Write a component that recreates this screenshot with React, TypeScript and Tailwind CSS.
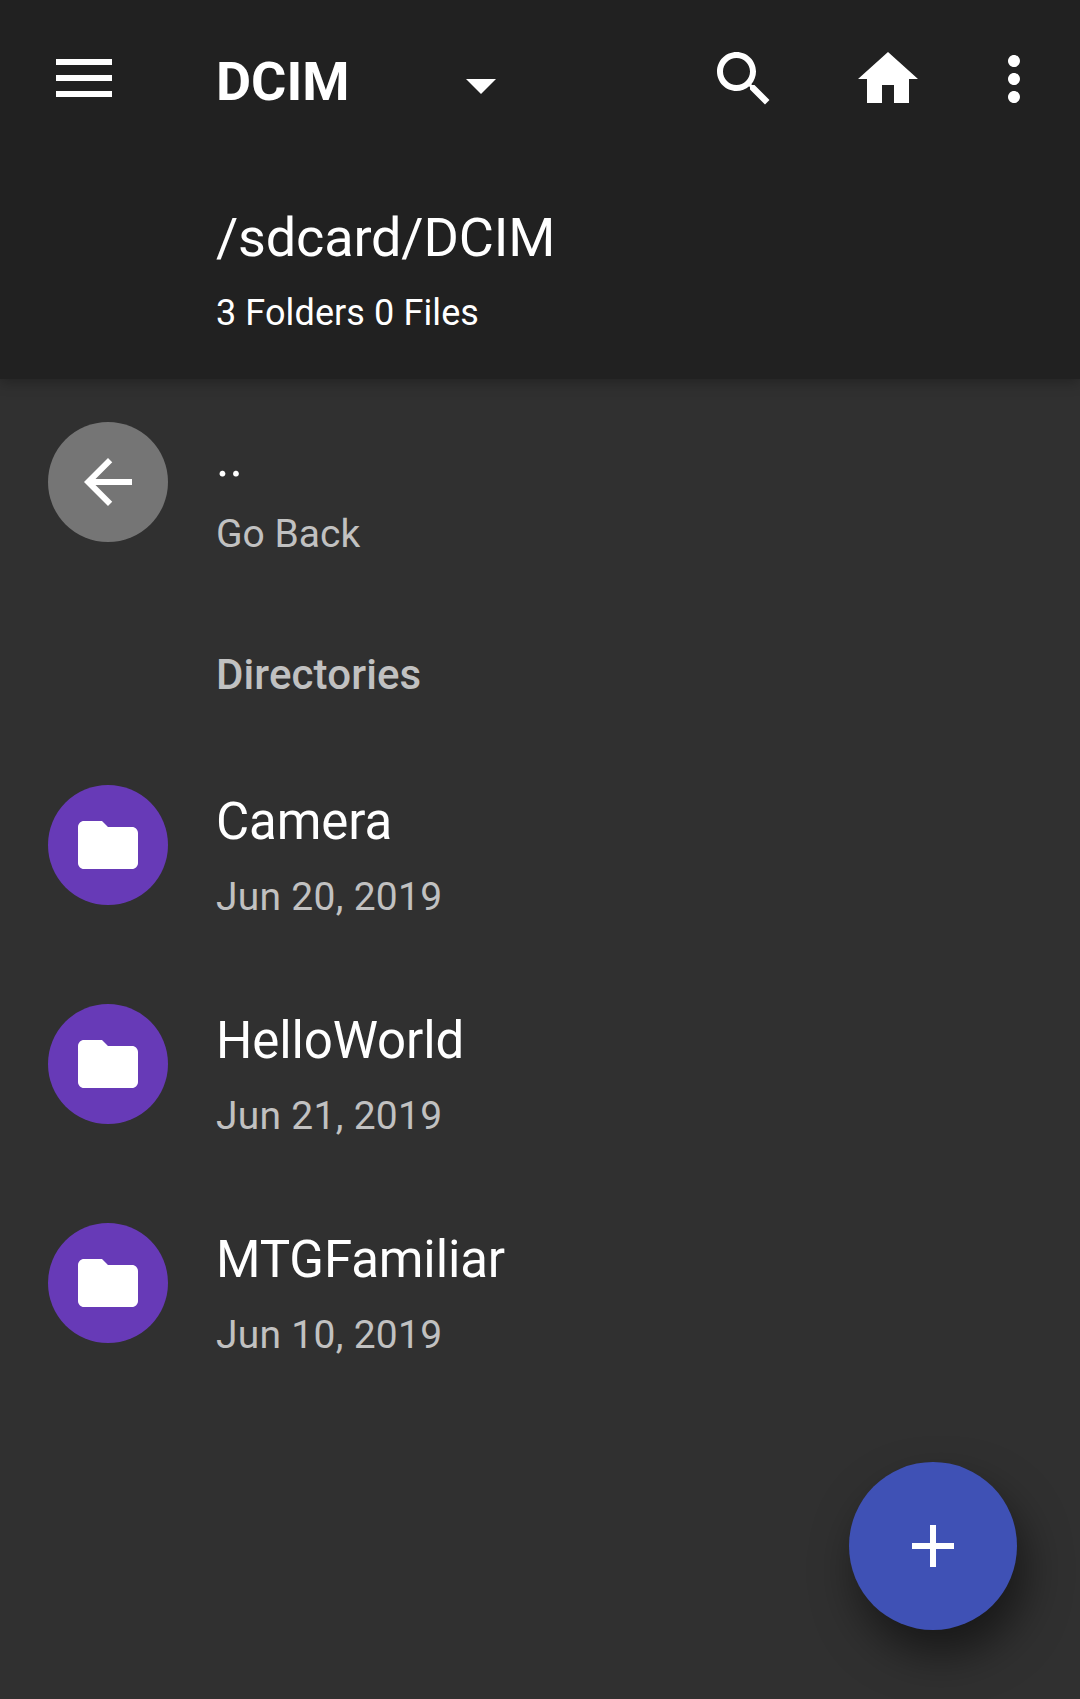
import type { ReactNode } from "react";

function Icon({ d, className = "" }: { d: string; className?: string }) {
  return (
    <svg viewBox="0 0 24 24" className={`size-[72px] shrink-0 fill-white ${className}`} aria-hidden="true">
      <path d={d} />
    </svg>
  );
}

const icons = {
  caret: "M7 10l5 5 5-5z",
  search:
    "M15.5 14h-.79l-.28-.27C15.41 12.59 16 11.11 16 9.5 16 5.91 13.09 3 9.5 3S3 5.91 3 9.5 5.91 16 9.5 16c1.61 0 3.09-.59 4.23-1.57l.27.28v.79l5 4.99L20.49 19l-4.99-5zm-6 0C7.01 14 5 11.99 5 9.5S7.01 5 9.5 5 14 7.01 14 9.5 11.99 14 9.5 14z",
  home: "M10 20v-6h4v6h5v-8h3L12 3 2 12h3v8z",
  more: "M12 8c1.1 0 2-.9 2-2s-.9-2-2-2-2 .9-2 2 .9 2 2 2zm0 2c-1.1 0-2 .9-2 2s.9 2 2 2 2-.9 2-2-.9-2-2-2zm0 6c-1.1 0-2 .9-2 2s.9 2 2 2 2-.9 2-2-.9-2-2-2z",
  back: "M20 11H7.83l5.59-5.59L12 4l-8 8 8 8 1.41-1.41L7.83 13H20v-2z",
  folder: "M10 4H4c-1.1 0-1.99.9-1.99 2L2 18c0 1.1.9 2 2 2h16c1.1 0 2-.9 2-2V8c0-1.1-.9-2-2-2h-8l-2-2z",
  add: "M19 13h-6v6h-2v-6H5v-2h6V5h2v6h6v2z",
};

const folders = [
  { name: "Camera", date: "Jun 20, 2019" },
  { name: "HelloWorld", date: "Jun 21, 2019" },
  { name: "MTGFamiliar", date: "Jun 10, 2019" },
];

function Row({ circle, icon, children }: { circle: string; icon: string; children: ReactNode }) {
  return (
    <div className="flex h-[219px] items-start pl-12 pt-[43px]">
      <div className={`flex size-[120px] shrink-0 items-center justify-center rounded-full ${circle}`}>
        <Icon d={icon} />
      </div>
      <div className="ml-12">{children}</div>
    </div>
  );
}

export default function App() {
  return (
    <div className="relative h-[1699px] w-[1080px] overflow-hidden bg-[#303030] font-['Roboto',sans-serif] text-white">
      <header className="h-[379px] bg-[#212121] shadow-[0_4px_12px_rgba(0,0,0,0.25)]">
        <div className="flex h-[158px] items-center pl-14 pr-[30px]">
          <button aria-label="Menu" className="flex w-14 flex-col gap-2.5 pb-0.5">
            <span className="h-1.5 bg-white" />
            <span className="h-1.5 bg-white" />
            <span className="h-1.5 bg-white" />
          </button>
          <h1 className="ml-[104px] w-[229px] pt-1.5 text-[54px] font-bold leading-[64px]">DCIM</h1>
          <Icon d={icons.caret} className="mt-3" />
          <div className="ml-auto flex">
            <Icon d={icons.search} />
            <Icon d={icons.home} className="ml-[72px]" />
            <Icon d={icons.more} className="ml-[54px]" />
          </div>
        </div>
        <div className="pl-[216px] pt-12">
          <div className="text-[54px] leading-[64px] tracking-[-0.17px]">/sdcard/DCIM</div>
          <div className="mt-[22px] text-[36px] leading-[42px] tracking-[0.1px]">3 Folders 0 Files</div>
        </div>
      </header>

      <main>
        <Row circle="bg-[#757575]" icon={icons.back}>
          <div className="mt-[7px] text-[51px] leading-[60px]">..</div>
          <div className="mt-[22px] text-[39px] leading-[46px] text-[#c1c1c1]">Go Back</div>
        </Row>
        <h2 className="h-[144px] pl-[216px] pt-[52px] text-[42px] font-medium leading-[50px] tracking-[0.12px] text-[#c1c1c1]">
          Directories
        </h2>
        {folders.map((f) => (
          <Row key={f.name} circle="bg-[#673ab7]" icon={icons.folder}>
            <div className="mt-[7px] text-[51px] leading-[60px] tracking-[-0.12px]">{f.name}</div>
            <div className="mt-[22px] text-[39px] leading-[46px] tracking-[0.28px] text-[#c1c1c1]">{f.date}</div>
          </Row>
        ))}
      </main>

      <button
        aria-label="Add"
        className="absolute bottom-[69px] right-[63px] flex size-[168px] items-center justify-center rounded-full bg-[#3f51b5] shadow-[8px_24px_44px_rgba(0,0,0,0.5)]"
      >
        <Icon d={icons.add} />
      </button>
    </div>
  );
}
